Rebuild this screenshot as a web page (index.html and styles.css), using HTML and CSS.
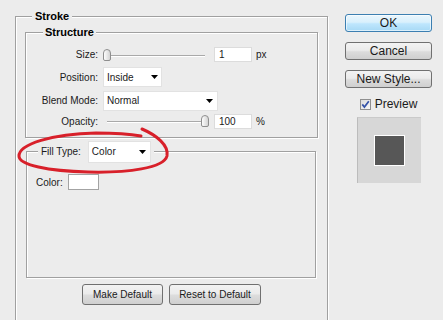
FILE: index.html
```html
<!DOCTYPE html>
<html lang="en">
<head>
<meta charset="UTF-8">
<title>Layer Style - Stroke</title>
<link rel="stylesheet" href="styles.css">
</head>
<body>
<div class="dialog">
    <!-- Left: Stroke settings -->
    <div class="group stroke">
        <div class="legend">Stroke</div>

        <div class="group structure">
            <div class="legend">Structure</div>
            <div class="form">
                <span class="label">Size:</span>
                <div class="control">
                    <div class="slider"><span class="thumb thumb-start"></span></div>
                    <div class="field">1</div>
                    <span class="unit">px</span>
                </div>

                <span class="label">Position:</span>
                <div class="control">
                    <div class="select select-position">
                        <span>Inside</span>
                        <svg width="7" height="4" viewBox="0 0 7 4"><path d="M0 0h7L3.5 4z" fill="#000"/></svg>
                    </div>
                </div>

                <span class="label">Blend Mode:</span>
                <div class="control">
                    <div class="select select-blend">
                        <span>Normal</span>
                        <svg width="7" height="4" viewBox="0 0 7 4"><path d="M0 0h7L3.5 4z" fill="#000"/></svg>
                    </div>
                </div>

                <span class="label">Opacity:</span>
                <div class="control">
                    <div class="slider"><span class="thumb thumb-end"></span></div>
                    <div class="field">100</div>
                    <span class="unit">%</span>
                </div>
            </div>
        </div>

        <div class="group fill">
            <div class="legend fill-legend">
                <span>Fill Type:</span>
                <div class="select select-fill">
                    <span>Color</span>
                    <svg width="7" height="4" viewBox="0 0 7 4"><path d="M0 0h7L3.5 4z" fill="#000"/></svg>
                </div>
            </div>
            <div class="color-row">
                <span>Color:</span>
                <div class="swatch"></div>
            </div>
        </div>

        <div class="defaults">
            <button class="btn btn-small btn-make">Make Default</button>
            <button class="btn btn-small btn-reset">Reset to Default</button>
        </div>
    </div>

    <!-- Right: dialog actions -->
    <div class="actions">
        <button class="btn btn-ok">OK</button>
        <button class="btn">Cancel</button>
        <button class="btn">New Style...</button>
        <label class="preview-check">
            <span class="checkbox">
                <svg width="9" height="9" viewBox="0 0 9 9"><path d="M1.3 4.4L3.4 7 7.8 1.2" fill="none" stroke="#3553a8" stroke-width="1.7"/></svg>
            </span>
            Preview
        </label>
        <div class="preview-box">
            <div class="preview-swatch"></div>
        </div>
    </div>
</div>

<!-- hand-drawn red circle around Fill Type -->
<svg class="markup" width="443" height="320" viewBox="0 0 443 320">
    <path d="M142 129 C156 135 169 145 167 156 C164 168 128 173 88 172 C48 171 19 165 19 156 C19 144 52 134 96 133 C116 133 130 134 141 136" fill="none" stroke="#d8202a" stroke-width="3" stroke-linecap="round"/>
</svg>
</body>
</html>
```

FILE: styles.css
```css
body {
    margin: 0;
    background-color: #ececec;
    font-family: "Liberation Sans", Arial, sans-serif;
    font-size: 10px;
    color: #1a1a1a;
    overflow: hidden;
}
.dialog {
    display: flex;
    align-items: flex-start;
    padding: 14px 0 0 15px;
}
.group {
    box-sizing: border-box;
    border: 1px solid #a0a0a0;
    box-shadow: 1px 1px 0 #fff, inset 1px 1px 0 #fff;
}
.legend {
    display: table;
    margin-top: -7px;
    padding: 0 3px;
    background-color: #ececec;
    font-size: 11px;
    font-weight: bold;
    line-height: 12px;
    color: #000;
}
.stroke {
    width: 313px;
    height: 305px;
    margin-top: 2px;
}
.stroke > .legend {
    margin-left: 16px;
}
.structure {
    margin: 10px 9px 0 9px;
}
.structure > .legend {
    margin-left: 17px;
    padding: 0 2px;
}
.form {
    display: grid;
    grid-template-columns: 72px auto;
    grid-template-rows: 21px 24px 23px 18px;
    column-gap: 5px;
    align-items: center;
    padding: 6px 0 7px;
}
.label {
    text-align: right;
}
.control {
    display: flex;
    align-items: center;
}
.slider {
    position: relative;
    width: 106px;
    height: 12px;
}
.slider::before {
    content: "";
    position: absolute;
    left: 4px;
    right: 4px;
    top: 6px;
    height: 1px;
    background-color: #a9a9a9;
    box-shadow: 0 1px 0 #fff;
}
.thumb {
    position: absolute;
    top: 0;
    width: 8px;
    height: 12px;
    box-sizing: border-box;
    border: 1px solid #8e8e8e;
    border-radius: 4px 4px 2px 2px;
    background: linear-gradient(to right, #fdfdfd, #d4d4d4);
}
.thumb-start {
    left: 0;
}
.thumb-end {
    right: 0;
}
.field {
    box-sizing: border-box;
    width: 38px;
    height: 15px;
    margin-left: 5px;
    padding-left: 4px;
    background-color: #fff;
    border: 1px solid #dcdcdc;
    line-height: 13px;
}
.unit {
    margin-left: 4px;
}
.select {
    box-sizing: border-box;
    display: flex;
    align-items: center;
    justify-content: space-between;
    height: 20px;
    padding: 0 3px 0 3px;
    background-color: #fff;
    border: 1px solid #e2e2e2;
    font-weight: normal;
    font-size: 10px;
    color: #1a1a1a;
}
.select-position {
    width: 59px;
}
.select-blend {
    width: 115px;
    padding-right: 4px;
}
.select-fill {
    width: 63px;
    height: 22px;
    padding-right: 4px;
}
.fill {
    width: 290px;
    height: 127px;
    margin: 13px 0 0 10px;
}
.fill-legend {
    display: flex;
    align-items: center;
    gap: 7px;
    width: fit-content;
    margin: -11px 0 0 11px;
    font-size: 10px;
    font-weight: normal;
    color: #1a1a1a;
}
.color-row {
    display: flex;
    align-items: center;
    gap: 5px;
    padding: 11px 0 0 9px;
}
.swatch {
    box-sizing: border-box;
    width: 31px;
    height: 16px;
    background-color: #fff;
    border: 1px solid #a3a3a3;
}
.defaults {
    display: flex;
    justify-content: center;
    gap: 6px;
    margin-top: 6px;
}
.btn {
    box-sizing: border-box;
    width: 87px;
    height: 18px;
    margin: 0 0 10px;
    padding: 0;
    border: 1px solid #707070;
    border-radius: 3px;
    background: linear-gradient(#f3f3f3 0%, #ebebeb 45%, #dcdcdc 55%, #cfcfcf 100%);
    font-family: "Liberation Sans", Arial, sans-serif;
    font-size: 12px;
    color: #1a1a1a;
    line-height: 15px;
}
.btn-ok {
    border-color: #3c7fb1;
    background: linear-gradient(#eaf6fd 0%, #d9f0fc 45%, #bee6fd 55%, #a7d9f5 100%);
    box-shadow: inset 0 0 0 1px rgba(255,255,255,0.6);
}
.btn-small {
    height: 21px;
    margin: 0;
    font-size: 10px;
}
.btn-make {
    width: 81px;
}
.btn-reset {
    width: 92px;
}
.actions {
    display: flex;
    flex-direction: column;
    align-items: center;
    width: 87px;
    margin-left: 17px;
}
.preview-check {
    display: flex;
    align-items: center;
    gap: 4px;
    height: 12px;
    font-size: 12px;
}
.checkbox {
    box-sizing: border-box;
    display: flex;
    align-items: center;
    justify-content: center;
    width: 11px;
    height: 11px;
    border: 1px solid #8f8f8f;
    background: linear-gradient(135deg, #dcdcdc, #f8f8f8);
}
.preview-box {
    box-sizing: border-box;
    display: flex;
    align-items: center;
    justify-content: center;
    width: 64px;
    height: 66px;
    margin-top: 7px;
    background-color: #d7d7d7;
    border-left: 1px solid #bcbcbc;
    border-top: 1px solid #cacaca;
}
.preview-swatch {
    width: 29px;
    height: 29px;
    background-color: #575757;
    border: 1px solid #fff;
}
.markup {
    position: absolute;
    top: 0;
    left: 0;
    pointer-events: none;
}
```
